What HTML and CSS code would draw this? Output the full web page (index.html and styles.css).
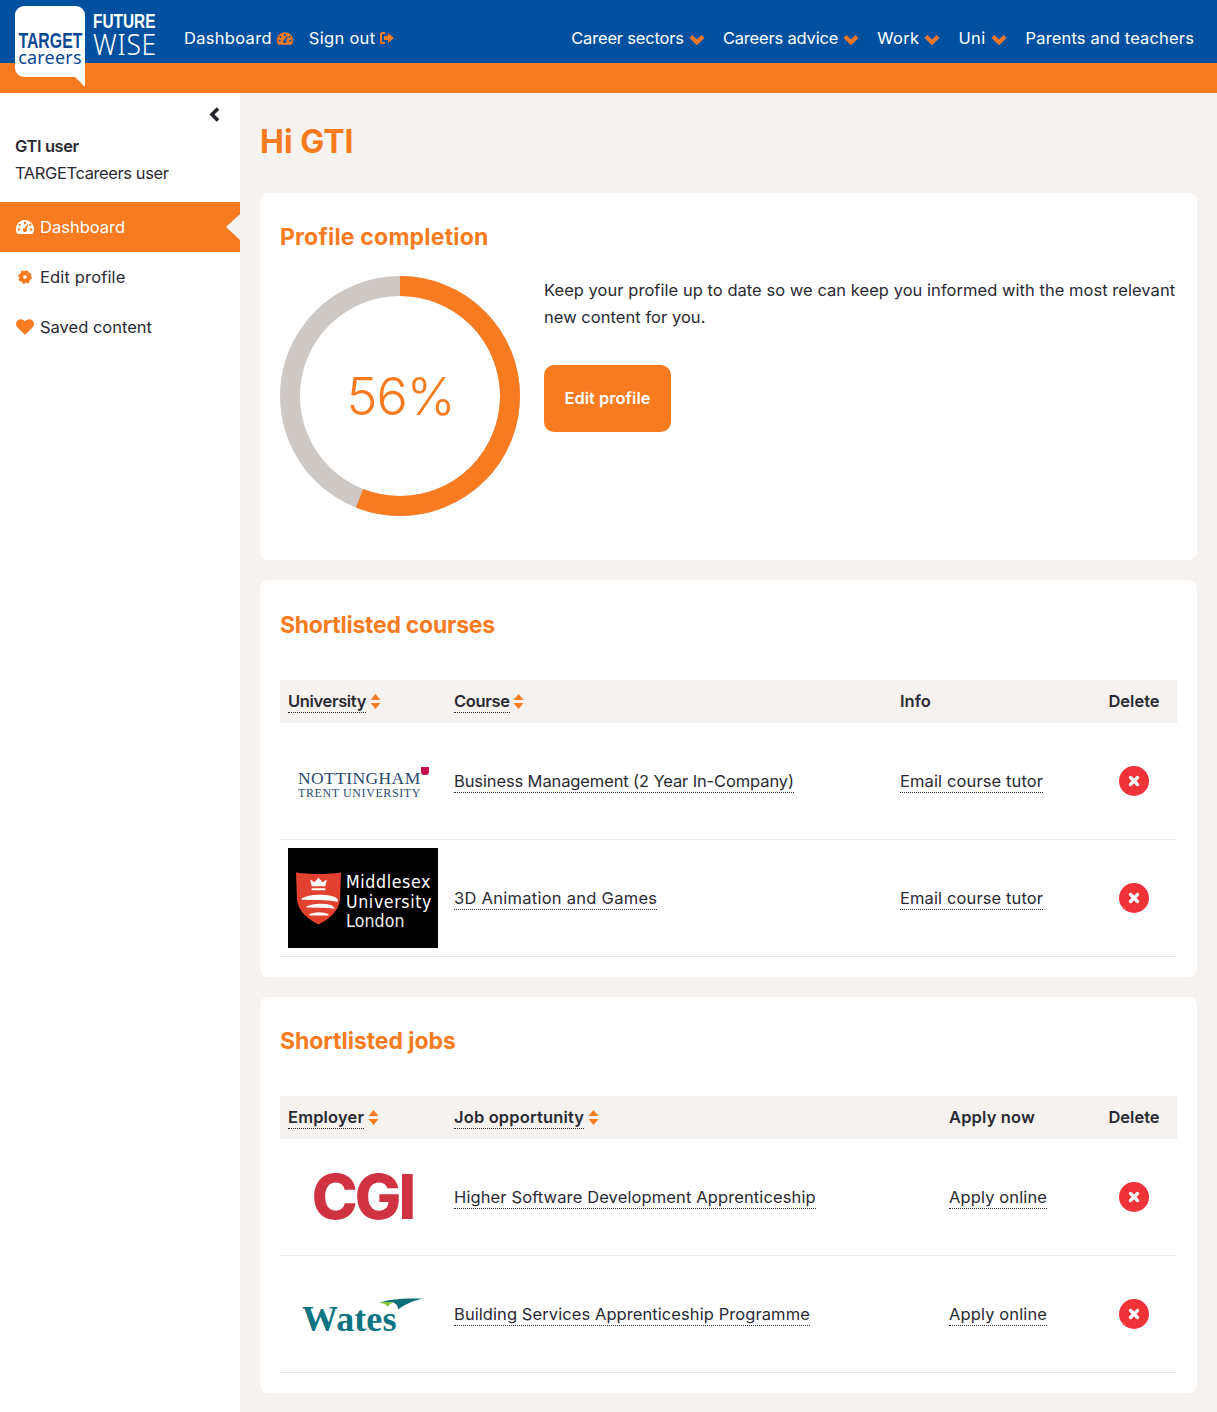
FILE: index.html
```html
<!DOCTYPE html>
<html lang="en">
<head>
<meta charset="utf-8">
<title>Future Wise dashboard</title>
<link rel="stylesheet" href="styles.css">
</head>
<body>
<svg class="defs" width="0" height="0" aria-hidden="true">
  <symbol id="i-gauge" viewBox="0 0 18 14">
    <path fill-rule="evenodd" d="M9 0a9 9 0 0 1 9 9c0 1.800-.5 3.400-1.300 4.700a.8.8 0 0 1-.7.300H2a.8.8 0 0 1-.7-.3A9 9 0 0 1 9 0ZM8 1.800v2.400h2V1.800ZM3.500 3.500 2.400 4.800l1.700 1.500 1.200-1.300ZM14.500 3.500 12.700 5l1.200 1.300 1.700-1.500ZM1.700 8.500v2h2.400v-2ZM13.900 8.500v2h2.400v-2ZM11.500 4.500 8.600 8.100a2 2 0 1 0 1.700.6l2.200-3.800Z"/>
  </symbol>
  <symbol id="i-signout" viewBox="0 0 14 12">
    <path d="M5 1H2.500A1.500 1.500 0 0 0 1 2.500v7A1.500 1.500 0 0 0 2.500 11H5" fill="none" stroke="currentColor" stroke-width="2"/>
    <path d="M8 1l6 5-6 5V8H4V4h4Z"/>
  </symbol>
  <symbol id="i-chev" viewBox="0 0 16 11">
    <path d="M2 2.500 8 8.500l6-6" fill="none" stroke="currentColor" stroke-width="4"/>
  </symbol>
  <symbol id="i-sort" viewBox="0 0 10 15">
    <path d="M5 0l5 6H0ZM0 9h10l-5 6Z"/>
  </symbol>
  <symbol id="i-x" viewBox="0 0 12 12">
    <path d="M2.500 2.500l7 7M9.500 2.500l-7 7" fill="none" stroke="#fff" stroke-width="3.400" stroke-linecap="round"/>
  </symbol>
</svg>

<header class="topbar">
  <div class="bluebar">
    <a class="logo">
      <span class="logo-target">TARGET</span>
      <span class="logo-careers">careers</span>
    </a>
    <div class="wise">
      <span class="wise-future">FUTURE</span>
      <span class="wise-wise">WISE</span>
    </div>
    <nav class="usernav">
      <a class="navlink">Dashboard <svg class="ic-gauge"><use href="#i-gauge"/></svg></a>
      <a class="navlink">Sign out <svg class="ic-signout"><use href="#i-signout"/></svg></a>
    </nav>
    <nav class="mainnav">
      <a class="navlink track-tight">Career sectors <svg class="ic-chev"><use href="#i-chev"/></svg></a>
      <a class="navlink track-tight">Careers advice <svg class="ic-chev"><use href="#i-chev"/></svg></a>
      <a class="navlink track-wide">Work <svg class="ic-chev"><use href="#i-chev"/></svg></a>
      <a class="navlink track-wide">Uni <svg class="ic-chev"><use href="#i-chev"/></svg></a>
      <a class="navlink track-slight nav-last">Parents and teachers</a>
    </nav>
  </div>
  <div class="orangebar"></div>
</header>

<div class="layout">
  <aside class="sidebar">
    <div class="collapse">
      <svg class="ic-back" viewBox="0 0 11 15"><path d="M9 1.500 3 7.500 9 13.500" fill="none" stroke="currentColor" stroke-width="3.600"/></svg>
    </div>
    <div class="who">
      <strong class="who-name">GTI user</strong>
      <span class="who-role">TARGETcareers user</span>
    </div>
    <ul class="sidemenu">
      <li class="sideitem active">
        <svg class="ic-side"><use href="#i-gauge"/></svg>Dashboard
      </li>
      <li class="sideitem track-slight">
        <svg class="ic-side" viewBox="0 0 18 18"><circle cx="9" cy="9" r="4.400" fill="none" stroke="currentColor" stroke-width="4.600"/><circle cx="9" cy="9" r="6.500" fill="none" stroke="currentColor" stroke-width="2.500" stroke-dasharray="2.550 2.550"/></svg>Edit profile
      </li>
      <li class="sideitem">
        <svg class="ic-side" viewBox="0 0 18 16"><path d="M9 16 1.800 8.800C-.5 6.500-.3 3.400 1.300 1.700 3.200-.3 6.700-.4 9 2.500c2.300-2.900 5.800-2.800 7.700-.8 1.600 1.700 1.800 4.800-.5 7.100Z"/></svg>Saved content
      </li>
    </ul>
  </aside>

  <main class="content">
    <h1 class="greeting">Hi GTI</h1>

    <section class="card card-profile">
      <h2 class="card-title title-profile">Profile completion</h2>
      <div class="profile-body">
        <div class="donut">
          <svg class="donut-svg" viewBox="0 0 240 240">
            <circle cx="120" cy="120" r="110" fill="none" stroke="#cfc9c6" stroke-width="20"/>
            <circle cx="120" cy="120" r="110" fill="none" stroke="#f97b20" stroke-width="20" pathLength="100" stroke-dasharray="56 44" transform="rotate(-90 120 120)"/>
          </svg>
          <span class="donut-label">56%</span>
        </div>
        <div class="profile-text">
          <p class="profile-p">Keep your profile up to date so we can keep you informed with the most relevant new content for you.</p>
          <a class="btn">Edit profile</a>
        </div>
      </div>
    </section>

    <section class="card card-courses">
      <h2 class="card-title card-title-table title-courses">Shortlisted courses</h2>
      <table class="grid">
        <colgroup><col class="c1"><col class="c2-course"><col class="c3-course"><col class="c4"></colgroup>
        <thead>
          <tr>
            <th class="th-tight"><span class="sortable">University</span> <svg class="ic-sort"><use href="#i-sort"/></svg></th>
            <th class="th-tight"><span class="sortable">Course</span> <svg class="ic-sort"><use href="#i-sort"/></svg></th>
            <th>Info</th>
            <th class="center">Delete</th>
          </tr>
        </thead>
        <tbody>
          <tr>
            <td>
              <div class="ntu">
                <span class="ntu-1">NOTTINGHAM</span>
                <span class="ntu-2">TRENT UNIVERSITY</span>
                <span class="ntu-badge"></span>
              </div>
            </td>
            <td><a class="dotted track-bm">Business Management (2 Year In-Company)</a></td>
            <td><a class="dotted">Email course tutor</a></td>
            <td class="center"><button class="del"><svg class="ic-x"><use href="#i-x"/></svg></button></td>
          </tr>
          <tr>
            <td>
              <div class="mdx">
                <svg class="mdx-shield" viewBox="0 0 48 54">
                  <path d="M1 1c15 2 31 2 46 0l-1 27C45 41 34 49 24 54 14 49 3 41 2 28Z" fill="#e2412f"/>
                  <path d="M17 15l-1.500-7 4.500 3 4-5 4 5 4.500-3-1.500 7ZM17 17h14v2H17Z" fill="#fff"/>
                  <path d="M7 28c8-4 26-5 34-1 1.500.8 2 2 2 3-10-2-25-2-36-2ZM12 36c7-3 18-3 25-1l2 2c-9-1-19-1-27-1ZM15 44c6-2 13-2 19 0-6 0-13 0-19 0Z" fill="#fff" stroke="#fff" stroke-width="1.500"/>
                </svg>
                <div class="mdx-text">
                  <span class="mdx-line mdx-spaced">Middlesex</span>
                  <span class="mdx-line mdx-spaced">University</span>
                  <span class="mdx-line mdx-light">London</span>
                </div>
              </div>
            </td>
            <td><a class="dotted track-3d">3D Animation and Games</a></td>
            <td><a class="dotted">Email course tutor</a></td>
            <td class="center"><button class="del"><svg class="ic-x"><use href="#i-x"/></svg></button></td>
          </tr>
        </tbody>
      </table>
    </section>

    <section class="card">
      <h2 class="card-title card-title-table title-jobs">Shortlisted jobs</h2>
      <table class="grid">
        <colgroup><col class="c1"><col class="c2-job"><col class="c3-job"><col class="c4"></colgroup>
        <thead>
          <tr>
            <th class="th-wide"><span class="sortable">Employer</span> <svg class="ic-sort"><use href="#i-sort"/></svg></th>
            <th class="th-wide"><span class="sortable">Job opportunity</span> <svg class="ic-sort"><use href="#i-sort"/></svg></th>
            <th class="th-wide">Apply now</th>
            <th class="center">Delete</th>
          </tr>
        </thead>
        <tbody>
          <tr>
            <td><div class="cgi">CGI</div></td>
            <td><a class="dotted">Higher Software Development Apprenticeship</a></td>
            <td><a class="dotted">Apply online</a></td>
            <td class="center"><button class="del"><svg class="ic-x"><use href="#i-x"/></svg></button></td>
          </tr>
          <tr>
            <td>
              <div class="wates">
                <span class="wates-text">Wates</span>
                <svg class="wates-swoosh" viewBox="0 0 44 18" preserveAspectRatio="none">
                  <path d="M0 7C8 2 24 0 44 1 36 3 28 7 19 16 19 11 17 7 13 6 8 5 4 6 0 7Z" fill="#0c6f78"/>
                  <path d="M0 7C5 5 11 5 14 7 11 8 10 10 9 12 7 9 4 7 0 7Z" fill="#8cc63f"/>
                </svg>
              </div>
            </td>
            <td><a class="dotted track-bs">Building Services Apprenticeship Programme</a></td>
            <td><a class="dotted">Apply online</a></td>
            <td class="center"><button class="del"><svg class="ic-x"><use href="#i-x"/></svg></button></td>
          </tr>
        </tbody>
      </table>
    </section>
  </main>
</div>
</body>
</html>
```

FILE: styles.css
```css
* { box-sizing: border-box; }
html, body { margin: 0; padding: 0; }
body {
  font-family: "Inter", "Noto Sans", sans-serif;
  font-size: 16.5px;
  color: #2a2a33;
  background: #f5f2f0;
  height: 1412px;
  overflow: hidden;
}
.defs { position: absolute; }

/* header */
.topbar { position: relative; }
.bluebar {
  height: 63px;
  background: #0050a0;
  display: flex;
  align-items: center;
  padding: 0 23px 0 15px;
  color: #fff;
}
.orangebar { height: 30px; background: #f97b20; }
.logo {
  position: absolute;
  left: 15px;
  top: 6px;
  width: 70px;
  height: 71px;
  background: #fff;
  border-radius: 9px 9px 0 9px;
  display: flex;
  flex-direction: column;
  align-items: center;
  padding-top: 25px;
  color: #0b4a92;
}
.logo::after {
  content: "";
  position: absolute;
  right: 0;
  top: 71px;
  width: 10px;
  height: 10px;
  background: #fff;
  clip-path: polygon(0 0, 100% 0, 100% 100%);
}
.logo-target {
  font: 700 22px/20px "Liberation Sans", sans-serif;
  transform: scaleX(.72);
}
.logo-careers {
  font: 400 18px/12px "Noto Sans", sans-serif;
  letter-spacing: .2px;
}
.wise {
  margin-left: 78px;
  width: 63px;
  display: flex;
  flex-direction: column;
  align-items: flex-start;
  padding-top: 5px;
}
.wise-future {
  font: 700 19.5px/19px "Liberation Sans", sans-serif;
  transform: scaleX(.79);
  transform-origin: left;
}
.wise-wise {
  font: 300 30px/26px "Noto Sans", sans-serif;
  letter-spacing: .8px;
  transform: scaleX(.88);
  transform-origin: left;
}
.usernav { display: flex; gap: 16px; margin-left: 28px; padding-top: 13px; letter-spacing: .3px; }
.mainnav { display: flex; gap: 18px; margin-left: auto; padding-top: 13px; }
.navlink { display: flex; align-items: center; gap: 5px; color: #fff; white-space: nowrap; }
.nav-last { margin-left: 1px; }
.track-tight { letter-spacing: -.18px; }
.track-wide { letter-spacing: .35px; }
.track-slight { letter-spacing: .15px; }
.ic-gauge { width: 16px; height: 13px; fill: #f97b20; }
.ic-signout { width: 14px; height: 12px; fill: #f97b20; color: #f97b20; }
.ic-chev { width: 16px; height: 11px; color: #f0782a; margin-top: 2px; }

/* layout */
.layout { display: flex; align-items: stretch; height: 1319px; }
.sidebar { width: 240px; flex: none; background: #fff; }
.collapse { display: flex; justify-content: flex-end; padding: 14px 20px 0 0; height: 40px; color: #22222c; }
.ic-back { width: 11px; height: 15px; }
.who { padding: 0 15px; display: flex; flex-direction: column; line-height: 27px; letter-spacing: -.4px; }
.who-name { font-weight: 600; }
.sidemenu { list-style: none; margin: 15px 0 0; padding: 0; }
.sideitem {
  height: 50px;
  display: flex;
  align-items: center;
  padding-left: 16px;
  gap: 6px;
  position: relative;
}
.ic-side { width: 18px; height: 16px; fill: #f97b20; color: #f97b20; }
.sideitem.active { background: #f97b20; color: #fff; }
.sideitem.active .ic-side { fill: #fff; }
.sideitem.active::after {
  content: "";
  position: absolute;
  right: 0;
  top: 12px;
  width: 14px;
  height: 26px;
  background: #f5f2f0;
  clip-path: polygon(100% 0, 0 50%, 100% 100%);
}

/* main */
.content { flex: 1; padding: 0 20px; }
.greeting { margin: 28px 0 31px; font-size: 32px; line-height: 41px; font-weight: 700; color: #f97b20; }
.card { background: #fff; border-radius: 8px; padding: 0 20px; margin-bottom: 20px; height: 396px; overflow: hidden; }
.card-courses { height: 397px; }
.card-profile { height: 367px; }
.card-title { margin: 0; padding-top: 29px; font-size: 23px; line-height: 30px; font-weight: 700; color: #f97b20; }
.title-profile { letter-spacing: .2px; }
.title-courses { letter-spacing: -.26px; padding-top: 30px; height: 100px; }
.title-jobs { letter-spacing: -.05px; padding-top: 29px; height: 99px; }
.profile-body { display: flex; gap: 24px; margin-top: 24px; }
.donut { position: relative; width: 240px; height: 240px; flex: none; display: flex; align-items: center; justify-content: center; }
.donut-svg { position: absolute; inset: 0; }
.donut-label { position: relative; margin-left: 1px; font-size: 52px; font-weight: 300; letter-spacing: -1px; color: #f97b20; }
.profile-text { flex: 1; }
.profile-p { margin: 1px 0 0; line-height: 27px; letter-spacing: .04px; }
.btn {
  display: inline-flex;
  align-items: center;
  justify-content: center;
  margin-top: 34px;
  width: 127px;
  height: 67px;
  padding-bottom: 2px;
  background: #f97b20;
  border-radius: 10px;
  color: #fff;
  font-weight: 600;
}

/* tables */
.grid { width: 897px; border-collapse: collapse; table-layout: fixed; }
.c1 { width: 166px; }
.c2-course { width: 446px; }
.c3-course { width: 200px; }
.c2-job { width: 495px; }
.c3-job { width: 151px; }
.grid th {
  background: #f5f2f0;
  height: 43px;
  padding: 0 8px 2px;
  text-align: left;
  font-weight: 600;
  white-space: nowrap;
}
.grid .th-tight { letter-spacing: -.35px; }
.grid .th-wide { letter-spacing: .15px; }
.grid td {
  height: 116px;
  padding: 0 8px;
  border-bottom: 1px solid #e9e7e5;
  white-space: nowrap;
  letter-spacing: .12px;
}
.grid tbody tr:last-child td { height: 117px; }
.grid th.center, .grid td.center { text-align: center; padding-right: 9px; }
.sortable, .dotted { border-bottom: 1px dotted #2a2a33; padding-bottom: 1px; }
.grid .track-bm { letter-spacing: -.12px; }
.grid .track-3d { letter-spacing: .27px; }
.grid .track-bs { letter-spacing: .08px; }
.ic-sort { width: 11px; height: 15px; fill: #f97b20; vertical-align: -2px; }
.del {
  width: 30px;
  height: 30px;
  border: 0;
  padding: 0;
  border-radius: 50%;
  background: #ef3338;
  display: inline-flex;
  align-items: center;
  justify-content: center;
  vertical-align: middle;
}
.ic-x { width: 12px; height: 12px; }

/* logos */
.ntu { position: relative; width: 150px; height: 34px; display: flex; flex-direction: column; align-items: flex-start; padding: 5px 0 0 10px; color: #2a4a70; font-family: "Liberation Serif", serif; }
.ntu-1 { font-size: 17.5px; line-height: 18px; letter-spacing: .4px; }
.ntu-2 { font-size: 12px; line-height: 13px; letter-spacing: .6px; }
.ntu-badge { position: absolute; left: 133px; top: 3px; width: 8px; height: 8px; background: #c4104f; border-radius: 0 0 3px 3px; }
.mdx { width: 150px; height: 100px; background: #000; display: flex; align-items: center; padding-left: 7px; gap: 4px; color: #fff; }
.mdx-shield { width: 47px; height: 54px; flex: none; }
.mdx-text { display: flex; flex-direction: column; font-family: "DejaVu Sans", sans-serif; padding-top: 8px; }
.mdx-line { font-size: 18px; line-height: 19.5px; transform: scaleX(.88); transform-origin: left; }
.mdx-spaced { letter-spacing: .7px; }
.mdx-light { color: #eee; letter-spacing: .1px; }
.cgi { width: 150px; text-align: center; font: 800 62px/60px "Inter", sans-serif; color: #cf3341; letter-spacing: -3px; padding-right: 1px; }
.wates { position: relative; width: 150px; height: 40px; padding: 3px 0 0 14px; }
.wates-text { font: 700 36px/44px "Liberation Serif", serif; color: #0c7482; }
.wates-swoosh { position: absolute; left: 91px; top: 4px; width: 44px; height: 13px; }
```
